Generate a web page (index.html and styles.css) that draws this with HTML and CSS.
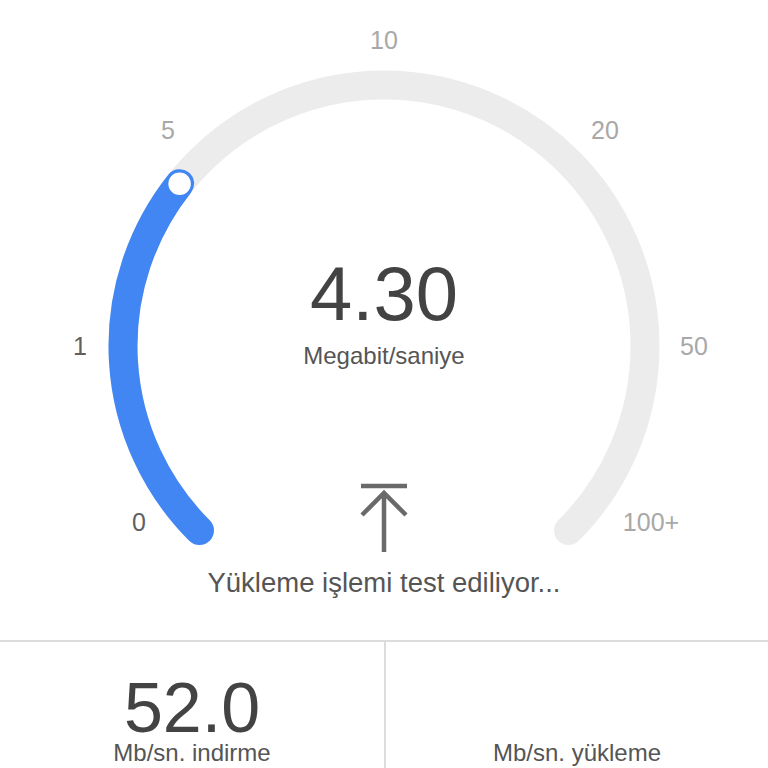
FILE: index.html
```html
<!DOCTYPE html>
<html lang="tr">
<head>
<meta charset="utf-8">
<title>Hız testi</title>
<link rel="stylesheet" href="styles.css">
</head>
<body>
<div class="page">
  <section class="gauge">
    <svg class="dial" viewBox="0 0 768 640" width="768" height="640">
      <path class="track" d="M 199.45 530.55 A 261 261 0 1 1 568.55 530.55"/>
      <path class="fill" d="M 199.45 530.55 A 261 261 0 0 1 179.6 183.7"/>
      <circle class="knob" cx="179.6" cy="183.7" r="12.5"/>
      <text class="tick on" x="139" y="522">0</text>
      <text class="tick on" x="80" y="346">1</text>
      <text class="tick" x="168" y="130">5</text>
      <text class="tick" x="384" y="40">10</text>
      <text class="tick" x="605" y="130">20</text>
      <text class="tick" x="694" y="346">50</text>
      <text class="tick" x="651" y="522">100+</text>
    </svg>
    <div class="readout">
      <div class="speed">4.30</div>
      <div class="unit">Megabit/saniye</div>
      <svg class="arrow" viewBox="0 0 50 70" width="50" height="70">
        <path d="M2 4 H48 M25 10 V70 M3 33 L25 11 L47 33"/>
      </svg>
      <div class="status">Yükleme işlemi test ediliyor...</div>
    </div>
  </section>
  <section class="stats">
    <div class="stat">
      <div class="value">52.0</div>
      <div class="label">Mb/sn. indirme</div>
    </div>
    <div class="stat">
      <div class="value"></div>
      <div class="label">Mb/sn. yükleme</div>
    </div>
  </section>
</div>
</body>
</html>
```
FILE: styles.css
```css
html, body {
  margin: 0;
  padding: 0;
  background: #ffffff;
}
body {
  font-family: "Liberation Sans", Arial, sans-serif;
  width: 768px;
  height: 768px;
  overflow: hidden;
}
.page {
  display: flex;
  flex-direction: column;
  width: 768px;
}
.gauge {
  display: grid;
  height: 640px;
  border-bottom: 2px solid #dcdcdc;
}
.dial, .readout {
  grid-area: 1 / 1;
}
.dial {
  display: block;
}
.track {
  fill: none;
  stroke: #ececec;
  stroke-width: 29;
  stroke-linecap: round;
}
.fill {
  fill: none;
  stroke: #4186f2;
  stroke-width: 29;
  stroke-linecap: round;
}
.knob {
  fill: #ffffff;
  stroke: #4186f2;
  stroke-width: 2.5;
}
.tick {
  font-family: "Liberation Sans", Arial, sans-serif;
  font-size: 25px;
  fill: #a8a8a8;
  text-anchor: middle;
  dominant-baseline: central;
}
.tick.on {
  fill: #5f5f5f;
}
.readout {
  display: flex;
  flex-direction: column;
  align-items: center;
  padding-top: 256px;
}
.speed {
  font-size: 76px;
  line-height: 76px;
  color: #434343;
}
.unit {
  margin-top: 12px;
  font-size: 24px;
  line-height: 24px;
  color: #555555;
}
.arrow {
  display: block;
  margin-top: 114px;
  fill: none;
  stroke: #6a6a6a;
  stroke-width: 4.5;
}
.status {
  margin-top: 17px;
  font-size: 27.5px;
  line-height: 27px;
  color: #555555;
}
.stats {
  display: grid;
  grid-template-columns: 1fr 1fr;
  height: 126px;
}
.stat {
  display: flex;
  flex-direction: column;
  align-items: center;
  padding-top: 36px;
}
.stat + .stat {
  border-left: 2px solid #dcdcdc;
}
.value {
  min-height: 60px;
  font-size: 70px;
  line-height: 60px;
  color: #434343;
}
.label {
  margin-top: 3px;
  font-size: 24px;
  line-height: 24px;
  color: #555555;
}
```
